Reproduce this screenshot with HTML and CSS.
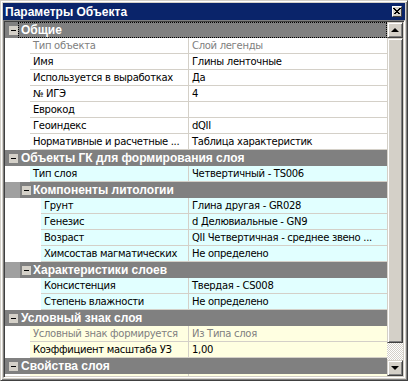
FILE: index.html
```html
<!DOCTYPE html>
<html>
    <head>
        <meta charset="UTF-8" />
        <title>Параметры Объекта</title>
        <link rel="stylesheet" href="styles.css">
    </head>
    <body>
        <div class="window">
            <div class="caption">
                <span class="caption-text">Параметры Объекта</span>
                <span class="close-btn">
                    <svg width="8" height="7" viewBox="0 0 8 7"><path d="M0.5 0.5 L6.5 6.5 M6.5 0.5 L0.5 6.5 M1.5 0.5 L7.5 6.5 M7.5 0.5 L1.5 6.5" stroke="#000" stroke-width="1" fill="none" shape-rendering="crispEdges"/></svg>
                </span>
            </div>

            <div class="grid">
                <div class="rows">
                    <div class="cat"><span class="toggle"></span><span class="cat-label focused">Общие</span></div>
                    <div class="row disabled"><span class="name">Тип объекта</span><span class="value">Слой легенды</span></div>
                    <div class="row"><span class="name">Имя</span><span class="value">Глины ленточные</span></div>
                    <div class="row"><span class="name">Используется в выработках</span><span class="value">Да</span></div>
                    <div class="row"><span class="name">№ ИГЭ</span><span class="value">4</span></div>
                    <div class="row"><span class="name">Еврокод</span><span class="value"></span></div>
                    <div class="row"><span class="name">Геоиндекс</span><span class="value">dQII</span></div>
                    <div class="row"><span class="name">Нормативные и расчетные ...</span><span class="value">Таблица характеристик</span></div>

                    <div class="cat"><span class="toggle"></span><span class="cat-label">Объекты ГК для формирования слоя</span></div>
                    <div class="row cyan"><span class="name">Тип слоя</span><span class="value">Четвертичный - TS006</span></div>
                    <div class="cat sub"><span class="toggle"></span><span class="cat-label">Компоненты литологии</span></div>
                    <div class="row cyan deep"><span class="name">Грунт</span><span class="value">Глина другая - GR028</span></div>
                    <div class="row cyan deep"><span class="name">Генезис</span><span class="value">d Делювиальные - GN9</span></div>
                    <div class="row cyan deep"><span class="name">Возраст</span><span class="value">QII Четвертичная - среднее звено ...</span></div>
                    <div class="row cyan deep"><span class="name">Химсостав магматических</span><span class="value">Не определено</span></div>
                    <div class="cat sub"><span class="toggle"></span><span class="cat-label">Характеристики слоев</span></div>
                    <div class="row cyan deep"><span class="name">Консистенция</span><span class="value">Твердая - CS008</span></div>
                    <div class="row cyan deep"><span class="name">Степень влажности</span><span class="value">Не определено</span></div>

                    <div class="cat"><span class="toggle"></span><span class="cat-label">Условный знак слоя</span></div>
                    <div class="row yellow disabled"><span class="name">Условный знак формируется</span><span class="value">Из Типа слоя</span></div>
                    <div class="row yellow"><span class="name">Коэффициент масштаба УЗ</span><span class="value">1,00</span></div>

                    <div class="cat"><span class="toggle"></span><span class="cat-label">Свойства слоя</span></div>
                    <div class="row yellow"><span class="name"></span><span class="value"></span></div>
                </div>

                <div class="vscroll">
                    <div class="sb-btn"><span class="arrow up"></span></div>
                    <div class="sb-thumb"></div>
                    <div class="sb-track"></div>
                    <div class="sb-btn"><span class="arrow down"></span></div>
                </div>
            </div>
        </div>
    </body>
</html>
```

FILE: styles.css
```css
* {
  margin: 0;
  padding: 0;
  box-sizing: border-box;
}

body {
  background: #d4d0c8;
  font-family: "DejaVu Sans", Verdana, sans-serif;
  font-size: 10px;
  color: #000;
}

.window {
  width: 408px;
  height: 381px;
  display: flex;
  flex-direction: column;
  padding: 2px;
  background: #d4d0c8;
  border: 1px solid;
  border-color: #d4d0c8 #404040 #404040 #d4d0c8;
  box-shadow: inset 1px 1px #fff, inset -1px -1px #808080;
}

/* title bar */
.caption {
  height: 17px;
  flex: 0 0 auto;
  display: flex;
  align-items: center;
  justify-content: space-between;
  padding: 0 3px 0 2px;
  background: #0a246a;
  color: #fff;
  font-family: "Liberation Sans", Arial, sans-serif;
  font-weight: bold;
  font-size: 12px;
}

.close-btn {
  width: 10px;
  height: 11px;
  display: flex;
  align-items: center;
  justify-content: center;
  background: #d4d0c8;
  border: 1px solid;
  border-color: #fff #404040 #404040 #fff;
}

/* property grid */
.grid {
  flex: 1;
  display: flex;
  overflow: hidden;
  border: 1px solid;
  border-color: #808080 #fff #fff #808080;
  box-shadow: inset 1px 1px #404040, inset -1px -1px #d4d0c8;
  padding: 1px;
}

.rows {
  flex: 1;
  overflow: hidden;
  background: #fff;
}

.row {
  display: flex;
  height: 16px;
  background: #fff;
  line-height: 15px;
  letter-spacing: -0.3px;
  white-space: nowrap;
}

.row .name {
  flex: 0 0 auto;
  width: 159px;
  margin-left: 25px;
  padding-left: 3px;
  overflow: hidden;
  border-right: 1px solid #d4d0c8;
  border-bottom: 1px solid #d4d0c8;
}

.row.deep .name {
  width: 148px;
  margin-left: 36px;
}

.row .value {
  flex: 1;
  padding-left: 3px;
  overflow: hidden;
  border-bottom: 1px solid #d4d0c8;
}

.row.cyan .name,
.row.cyan .value {
  background: #e1ffff;
}

.row.yellow .name,
.row.yellow .value {
  background: #ffffe1;
}

.row.disabled {
  color: #808080;
}

.cat {
  display: flex;
  align-items: center;
  height: 16px;
  background: #808080;
  color: #fff;
  font-family: "Liberation Sans", Arial, sans-serif;
  font-weight: bold;
  font-size: 12px;
  white-space: nowrap;
}

.cat.sub {
  background: linear-gradient(to right, #a0a0a0 15px, #808080 15px);
}

.toggle {
  flex: 0 0 auto;
  width: 9px;
  height: 9px;
  margin-left: 4px;
  background: #d4d0c8 linear-gradient(#000, #000) no-repeat center / 5px 1px;
}

.cat.sub .toggle {
  margin-left: 17px;
}

.cat-label {
  flex: 1;
  height: 16px;
  line-height: 15px;
  padding-left: 2px;
  border: 1px solid transparent;
}

.cat.sub .cat-label {
  padding-left: 1px;
}

.cat-label.focused {
  border: 1px dotted #000;
}

/* scrollbar */
.vscroll {
  flex: 0 0 16px;
  display: flex;
  flex-direction: column;
}

.sb-btn,
.sb-thumb {
  background: #d4d0c8;
  border: 1px solid;
  border-color: #d4d0c8 #404040 #404040 #d4d0c8;
  box-shadow: inset 1px 1px #fff, inset -1px -1px #808080;
}

.sb-btn {
  height: 16px;
  display: flex;
  align-items: center;
  justify-content: center;
}

.sb-thumb {
  flex: 1;
}

.sb-track {
  height: 17px;
  background: repeating-conic-gradient(#fff 0 25%, #d4d0c8 0 50%) 0 0 / 2px 2px;
}

.arrow {
  width: 0;
  height: 0;
  border-left: 4px solid transparent;
  border-right: 4px solid transparent;
}

.arrow.up {
  border-bottom: 4px solid #000;
}

.arrow.down {
  border-top: 4px solid #000;
}
```
